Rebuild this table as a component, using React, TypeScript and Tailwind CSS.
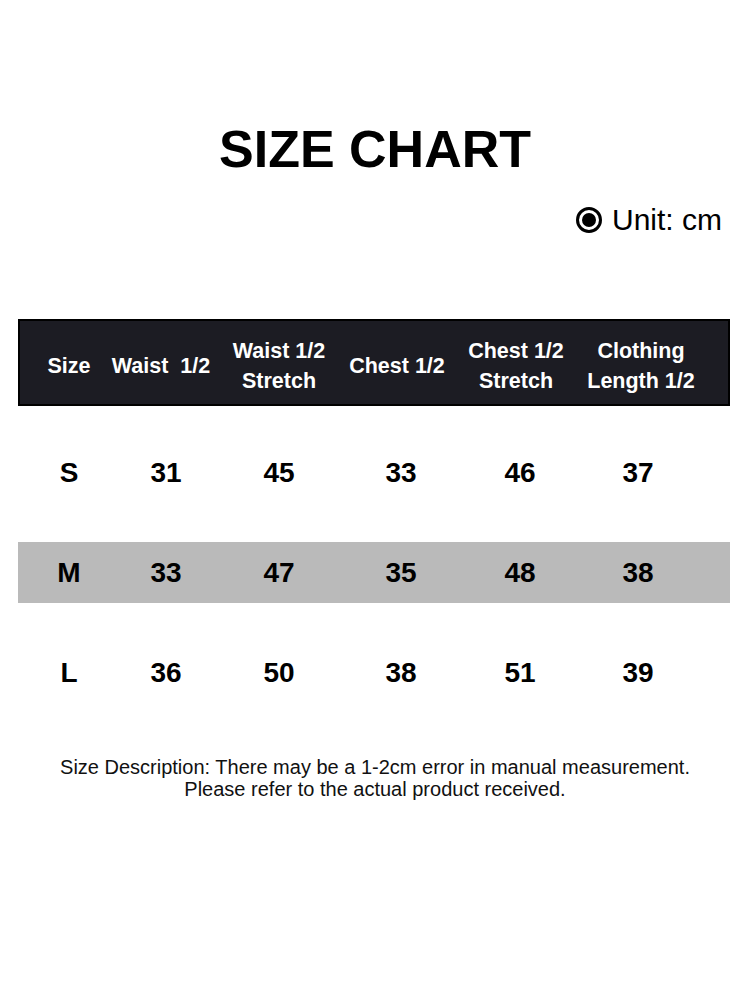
import React from "react";

const headers: string[][] = [
  ["Size"],
  ["Waist\u00a0\u00a01/2"],
  ["Waist 1/2", "Stretch"],
  ["Chest 1/2"],
  ["Chest 1/2", "Stretch"],
  ["Clothing", "Length 1/2"],
];

const rows: { cells: string[]; gray: boolean }[] = [
  { cells: ["S", "31", "45", "33", "46", "37"], gray: false },
  { cells: ["M", "33", "47", "35", "48", "38"], gray: true },
  { cells: ["L", "36", "50", "38", "51", "39"], gray: false },
];

const grid = "grid grid-cols-[98px_86px_150px_86px_152px_98px_1fr]";
const dataGrid = "grid grid-cols-[102px_92px_134px_110px_128px_108px_1fr]";

export default function App() {
  return (
    <div
      className="w-[750px] h-[1000px] bg-white text-black flex flex-col"
      style={{ fontFamily: '"Liberation Sans", Arial, sans-serif' }}
    >
      <h1 className="pt-[123px] text-center text-[52px] font-bold leading-none">SIZE CHART</h1>

      <div className="mt-[30px] flex items-center justify-end pr-[28px] h-[30px]">
        <span className="w-[26px] h-[26px] rounded-full border-[3px] border-black flex items-center justify-center">
          <span className="w-[14px] h-[14px] rounded-full bg-black" />
        </span>
        <span className="ml-[10px] text-[30px] leading-none">Unit: cm</span>
      </div>

      <div className="ml-[18px] mr-[20px] mt-[84px] h-[87px] bg-[#1c1c23] border-2 border-black">
        <div className={`${grid} h-full pt-[6px] text-white font-bold text-[21.5px] leading-[30px]`}>
          {headers.map((h, i) => (
            <div key={i} className="flex flex-col items-center justify-center whitespace-nowrap">
              {h.map((line, j) => (
                <span key={j}>{line}</span>
              ))}
            </div>
          ))}
          <div />
        </div>
      </div>

      <div className="ml-[18px] mr-[20px] mt-[36px] flex flex-col gap-[39px]">
        {rows.map((r, i) => (
          <div key={i} className={`${dataGrid} h-[61px] ${r.gray ? "bg-[#bababa]" : ""}`}>
            {r.cells.map((c, j) => (
              <div key={j} className="flex items-center justify-center text-[28px] font-bold">
                {c}
              </div>
            ))}
            <div />
          </div>
        ))}
      </div>

      <div className="mt-[53px] text-center text-[20px] leading-[22px] text-[#111]">
        <p>Size Description: There may be a 1-2cm error in manual measurement.</p>
        <p>Please refer to the actual product received.</p>
      </div>
    </div>
  );
}
